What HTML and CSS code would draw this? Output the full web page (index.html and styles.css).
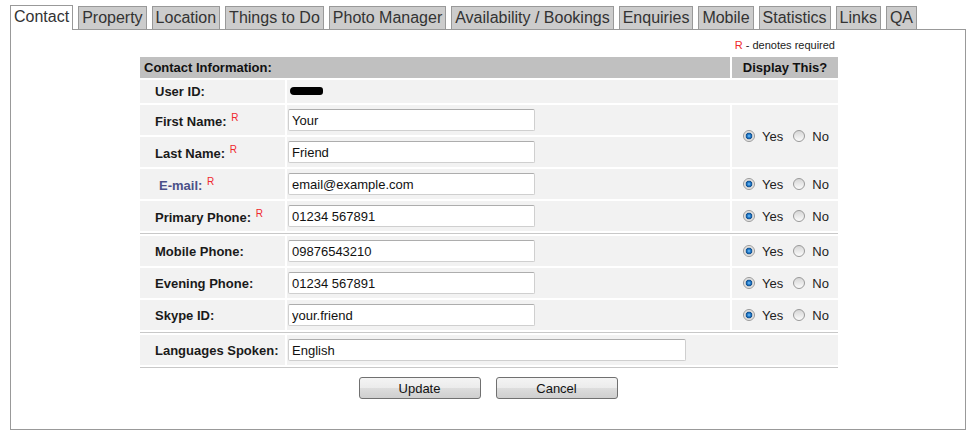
FILE: index.html
```html
<!DOCTYPE html>
<html lang="en">
<head>
    <meta charset="UTF-8">
    <meta name="viewport" content="width=device-width, initial-scale=1.0">
    <title>Contact</title>
    <link rel="stylesheet" href="styles.css">
</head>
<body>

<div class="page">
    <ul class="tabs">
        <li class="tab active">Contact</li>
        <li class="tab">Property</li>
        <li class="tab">Location</li>
        <li class="tab">Things to Do</li>
        <li class="tab">Photo Manager</li>
        <li class="tab">Availability / Bookings</li>
        <li class="tab">Enquiries</li>
        <li class="tab">Mobile</li>
        <li class="tab">Statistics</li>
        <li class="tab">Links</li>
        <li class="tab">QA</li>
    </ul>

    <div class="panel">
        <form class="contact-form">
            <p class="note"><span class="req-mark">R</span> - denotes required</p>

            <table class="contact-table">
                <colgroup>
                    <col class="col-label">
                    <col class="col-value">
                    <col class="col-display">
                </colgroup>
                <tr class="head">
                    <th colspan="2">Contact Information:</th>
                    <th class="display-head">Display This?</th>
                </tr>
                <tr class="short">
                    <td class="label">User ID:</td>
                    <td class="value" colspan="2"><span class="redacted"></span></td>
                </tr>
                <tr>
                    <td class="label">First Name: <span class="req">R</span></td>
                    <td class="value"><input class="field" type="text" value="Your"></td>
                    <td class="display" rowspan="2">
                        <div class="choice">
                            <label class="opt"><input type="radio" name="show-name" checked>Yes</label>
                            <label class="opt"><input type="radio" name="show-name">No</label>
                        </div>
                    </td>
                </tr>
                <tr>
                    <td class="label">Last Name: <span class="req">R</span></td>
                    <td class="value"><input class="field" type="text" value="Friend"></td>
                </tr>
                <tr>
                    <td class="label linked">E-mail: <span class="req">R</span></td>
                    <td class="value"><input class="field" type="text" value="email@example.com"></td>
                    <td class="display">
                        <div class="choice">
                            <label class="opt"><input type="radio" name="show-email" checked>Yes</label>
                            <label class="opt"><input type="radio" name="show-email">No</label>
                        </div>
                    </td>
                </tr>
                <tr>
                    <td class="label">Primary Phone: <span class="req">R</span></td>
                    <td class="value"><input class="field" type="text" value="01234 567891"></td>
                    <td class="display">
                        <div class="choice">
                            <label class="opt"><input type="radio" name="show-phone" checked>Yes</label>
                            <label class="opt"><input type="radio" name="show-phone">No</label>
                        </div>
                    </td>
                </tr>
                <tr class="rule"><td colspan="3"></td></tr>
                <tr>
                    <td class="label">Mobile Phone:</td>
                    <td class="value"><input class="field" type="text" value="09876543210"></td>
                    <td class="display">
                        <div class="choice">
                            <label class="opt"><input type="radio" name="show-mobile" checked>Yes</label>
                            <label class="opt"><input type="radio" name="show-mobile">No</label>
                        </div>
                    </td>
                </tr>
                <tr>
                    <td class="label">Evening Phone:</td>
                    <td class="value"><input class="field" type="text" value="01234 567891"></td>
                    <td class="display">
                        <div class="choice">
                            <label class="opt"><input type="radio" name="show-evening" checked>Yes</label>
                            <label class="opt"><input type="radio" name="show-evening">No</label>
                        </div>
                    </td>
                </tr>
                <tr>
                    <td class="label">Skype ID:</td>
                    <td class="value"><input class="field" type="text" value="your.friend"></td>
                    <td class="display">
                        <div class="choice">
                            <label class="opt"><input type="radio" name="show-skype" checked>Yes</label>
                            <label class="opt"><input type="radio" name="show-skype">No</label>
                        </div>
                    </td>
                </tr>
                <tr class="rule"><td colspan="3"></td></tr>
                <tr>
                    <td class="label">Languages Spoken:</td>
                    <td class="value" colspan="2"><input class="field wide" type="text" value="English"></td>
                </tr>
                <tr class="rule"><td colspan="3"></td></tr>
            </table>

            <div class="actions">
                <button type="submit" class="btn">Update</button>
                <button type="button" class="btn">Cancel</button>
            </div>
        </form>
    </div>
</div>

</body>
</html>
```

FILE: styles.css
```css
body {
    margin: 0;
    font-family: "Liberation Sans", Arial, sans-serif;
    color: #222;
    background-color: #fff;
}
.page {
    padding-left: 10px;
}
.tabs {
    list-style: none;
    margin: 0;
    padding: 0;
    height: 29px;
    display: flex;
    align-items: flex-end;
    gap: 5px;
}
.tab {
    height: 23px;
    box-sizing: border-box;
    padding: 0 3px;
    border: 1px solid #999;
    border-bottom: none;
    background-color: #ccc;
    font-size: 16px;
    line-height: 22px;
    color: #333;
}
.tab.active {
    position: relative;
    z-index: 1;
    height: 25px;
    margin-bottom: -1px;
    background-color: #fff;
}
.panel {
    width: 956px;
    box-sizing: border-box;
    border: 1px solid #999;
    padding: 9px 0 30px;
}
.note {
    width: 702px;
    box-sizing: border-box;
    margin: 0 0 0 127px;
    padding-right: 5px;
    text-align: right;
    font-size: 11px;
    line-height: 13px;
    color: #222;
}
.req-mark {
    color: #f0282d;
}
.contact-table {
    width: 702px;
    margin: 3px 0 0 127px;
    border-collapse: separate;
    border-spacing: 2px;
    table-layout: fixed;
    font-size: 13px;
}
.col-label {
    width: 145px;
}
.col-value {
    width: 443px;
}
.col-display {
    width: 106px;
}
.contact-table th {
    height: 21px;
    padding: 0 0 0 4px;
    background-color: #c0c0c0;
    text-align: left;
    font-weight: bold;
    color: #111;
}
.contact-table th.display-head {
    padding: 0;
    text-align: center;
}
.contact-table td {
    height: 30px;
    padding: 0;
    background-color: #f2f2f2;
}
.contact-table tr.short td {
    height: 23px;
}
.contact-table tr.rule td {
    height: 1px;
    font-size: 0;
    line-height: 0;
    background-color: #c8c8c8;
}
.label {
    padding-left: 15px !important;
    font-weight: bold;
    color: #1a1a1a;
}
.label.linked {
    padding-left: 19px !important;
    color: #4b5088;
}
.req {
    margin-left: 1px;
    font-size: 10px;
    font-weight: normal;
    color: #f0282d;
    vertical-align: 5px;
}
.value {
    padding-left: 1px !important;
}
.redacted {
    display: inline-block;
    width: 33px;
    height: 8px;
    margin: 0 0 3px 2px;
    border-radius: 4px 3px 3px 4px;
    background-color: #000;
    vertical-align: middle;
}
.field {
    width: 247px;
    height: 22px;
    box-sizing: border-box;
    margin: 0;
    padding: 0 3px;
    border: 1px solid #cfcfcf;
    border-top-color: #adadad;
    border-radius: 2px;
    background-color: #fff;
    font: 13px "Liberation Sans", Arial, sans-serif;
    color: #111;
    vertical-align: middle;
}
.field.wide {
    width: 398px;
}
.choice {
    display: flex;
    justify-content: center;
    align-items: center;
    gap: 10px;
    padding-left: 2px;
    color: #222;
}
.opt {
    display: flex;
    align-items: center;
    gap: 7px;
}
.opt input {
    -webkit-appearance: none;
    appearance: none;
    width: 12px;
    height: 12px;
    margin: 0;
    border: 1px solid #999;
    border-radius: 50%;
    background: linear-gradient(#d6d6d6, #fbfbfb);
}
.opt input:checked {
    background: radial-gradient(circle, #7cc8ff 0, #2a82d0 1.5px, #0e4f90 3px, #cfcfcf 3.6px, #eeeeee 5px);
}
.actions {
    display: flex;
    justify-content: center;
    gap: 15px;
    margin-top: 7px;
}
.btn {
    width: 122px;
    height: 22px;
    padding: 0;
    border: 1px solid #707070;
    border-radius: 3px;
    background: linear-gradient(#f4f4f4 0%, #ebebeb 50%, #dddddd 50%, #cfcfcf 100%);
    font: 13px "Liberation Sans", Arial, sans-serif;
    color: #111;
    cursor: pointer;
}
.btn:hover {
    background: linear-gradient(#eaf6fd 0%, #d9f0fc 50%, #bee6fd 50%, #a7d9f5 100%);
}
```
